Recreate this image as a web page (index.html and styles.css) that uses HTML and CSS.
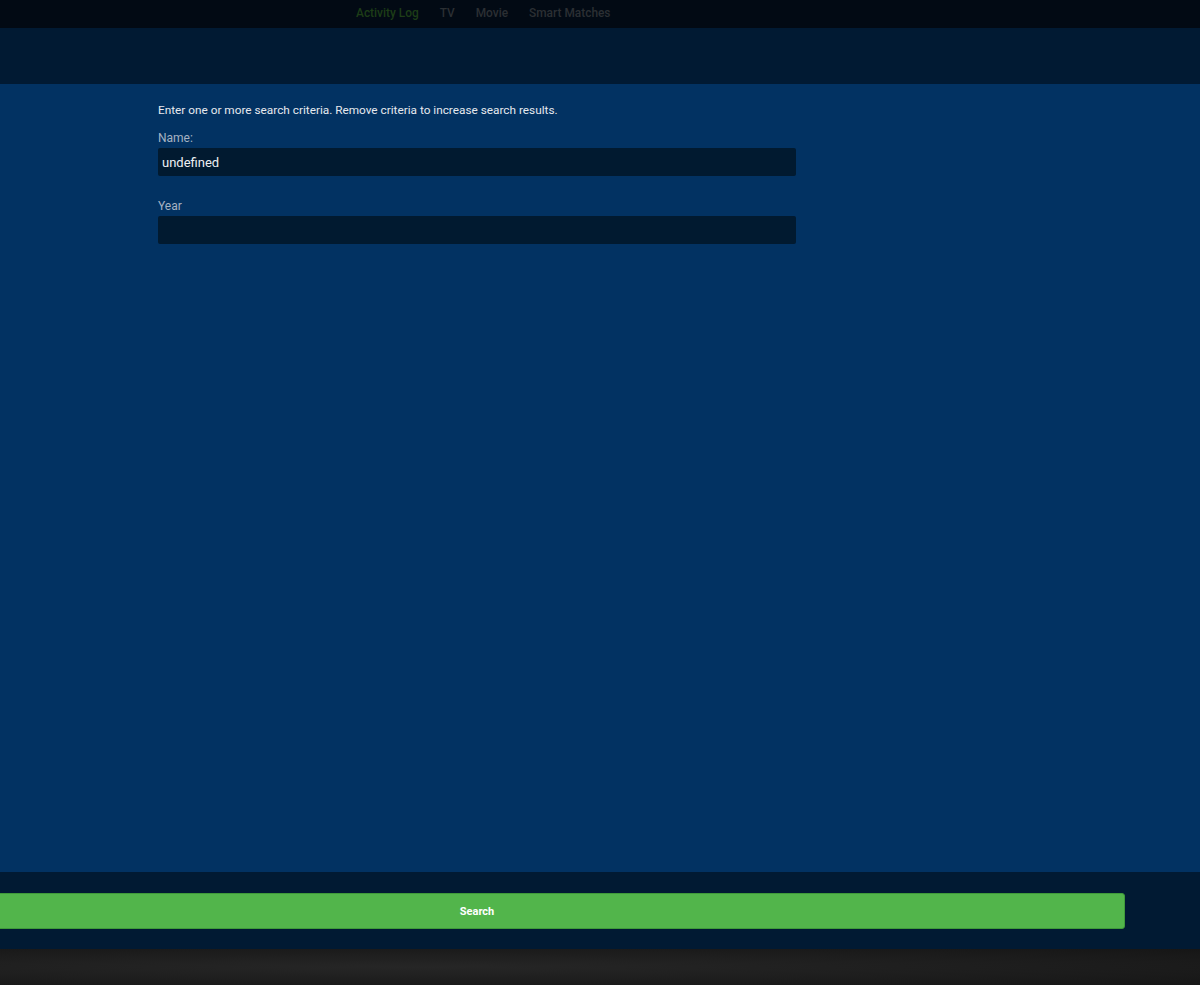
FILE: index.html
```html
<html>
<head>
  <meta charset="UTF-8" />
  <link rel="stylesheet" href="styles.css">
</head>
<body>

  <div class="topnav">
    <a class="navlink active">Activity Log</a>
    <a class="navlink">TV</a>
    <a class="navlink">Movie</a>
    <a class="navlink">Smart Matches</a>
  </div>

  <div class="header"></div>

  <div class="main">
    <div class="form">
      <p class="hint">Enter one or more search criteria. Remove criteria to increase search results.</p>
      <label class="label">Name:</label>
      <div class="input">undefined</div>
      <label class="label year">Year</label>
      <div class="input"></div>
    </div>
  </div>

  <div class="footer">
    <button class="search">Search</button>
  </div>

  <div class="backdrop"></div>

</body>
</html>
```

FILE: styles.css
```css
body {
    margin: 0;
    font-family: Roboto, "Liberation Sans", sans-serif;
    background: #1b1b1b;
    height: 985px;
    overflow: hidden;
}

.topnav {
    height: 28px;
    background: #020a14;
    display: flex;
    align-items: center;
    padding-left: 356px;
    gap: 21px;
}

.navlink {
    font-size: 11.9px;
    font-weight: 500;
    color: #2b2f33;
    line-height: 1;
}

.navlink.active {
    color: #1d3d17;
}

.header {
    height: 56px;
    background: #011a33;
}

.main {
    height: 788px;
    background: #023262;
}

.form {
    width: 638px;
    margin-left: 158px;
    padding-top: 19px;
}

.hint {
    margin: 0;
    font-size: 11.8px;
    color: #e6e9ee;
    line-height: 14px;
}

.label {
    display: block;
    font-size: 12px;
    color: #a6b3c2;
    margin-top: 14px;
    line-height: 14px;
}

.label.year {
    margin-top: 23px;
}

.input {
    height: 28px;
    margin-top: 3px;
    background: #011a30;
    border-radius: 2px;
    box-sizing: border-box;
    padding: 7px 4px 5px;
    font-size: 13px;
    line-height: 16px;
    color: #eef0f3;
}

.footer {
    height: 77px;
    background: #011a33;
    padding-top: 21px;
    box-sizing: border-box;
    overflow: hidden;
}

.search {
    display: block;
    margin: 0 0 0 -171px;
    width: 1296px;
    height: 36px;
    background: #52b54b;
    border: 1px solid #3f9a3a;
    border-radius: 3px;
    color: #fff;
    font-family: Roboto, "Liberation Sans", sans-serif;
    font-size: 11px;
    font-weight: bold;
}

.backdrop {
    height: 36px;
    background: radial-gradient(ellipse at 35% 50%, #262626, #161616);
}
```
